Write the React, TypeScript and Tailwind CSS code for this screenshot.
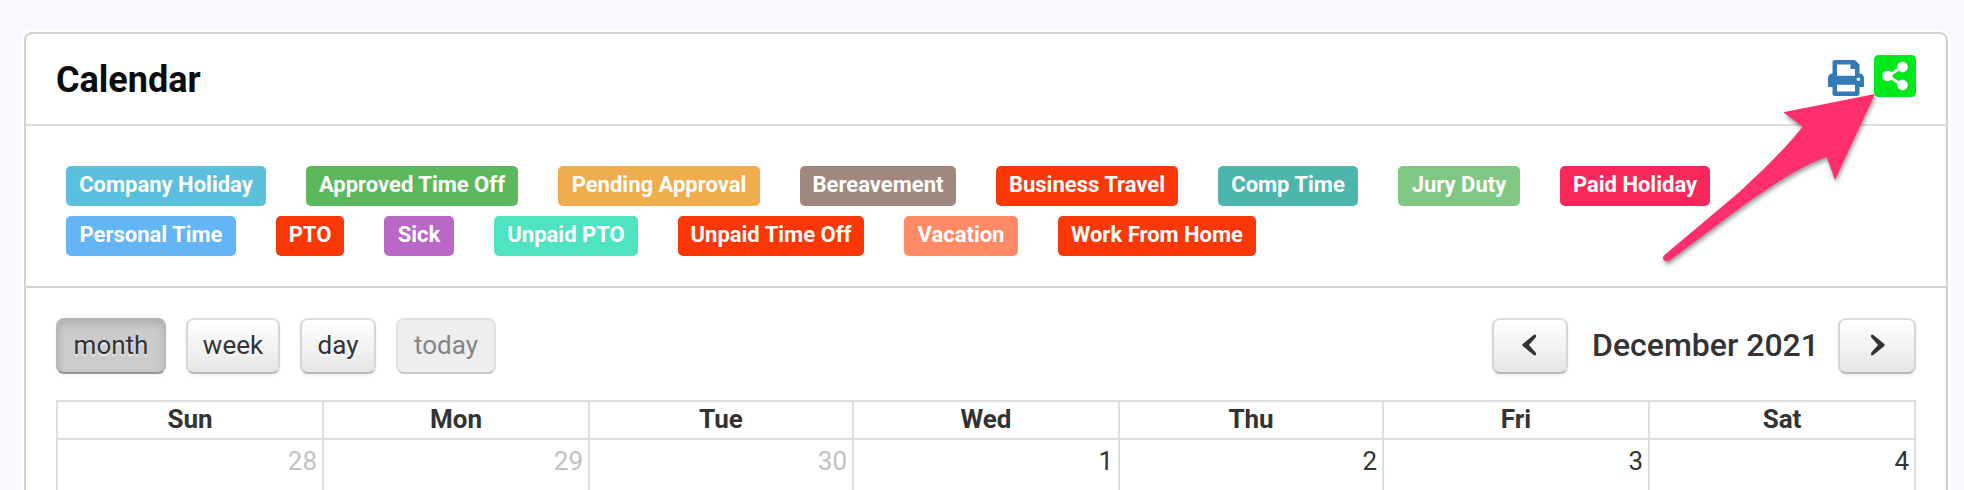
import React from "react";
import { FaPrint, FaShareAltSquare } from "react-icons/fa";

const legend = [
  [
    ["Company Holiday", "w-[200px] bg-[#5bc0de]"],
    ["Approved Time Off", "w-[212px] bg-[#5cb85c]"],
    ["Pending Approval", "w-[202px] bg-[#f0ad4e]"],
    ["Bereavement", "w-[156px] bg-[#a1887f]"],
    ["Business Travel", "w-[182px] bg-[#f93707]"],
    ["Comp Time", "w-[140px] bg-[#4db6ac]"],
    ["Jury Duty", "w-[122px] bg-[#81c784]"],
    ["Paid Holiday", "w-[150px] bg-[#f8285a]"],
  ],
  [
    ["Personal Time", "w-[170px] bg-[#64b5f6]"],
    ["PTO", "w-[68px] bg-[#f93707]"],
    ["Sick", "w-[70px] bg-[#ba68c8]"],
    ["Unpaid PTO", "w-[144px] bg-[#50e3c2]"],
    ["Unpaid Time Off", "w-[186px] bg-[#f93707]"],
    ["Vacation", "w-[114px] bg-[#ff8a65]"],
    ["Work From Home", "w-[198px] bg-[#f93707]"],
  ],
];

const days = [
  ["Sun", "28"],
  ["Mon", "29"],
  ["Tue", "30"],
  ["Wed", "1"],
  ["Thu", "2"],
  ["Fri", "3"],
  ["Sat", "4"],
];

const buttonBase =
  "flex h-14 shrink-0 items-center justify-center rounded-lg border-2 pb-0.5 text-[26px] text-[#333] [text-shadow:0_2px_2px_rgba(255,255,255,0.75)]";
const raised =
  "border-[#dedede] border-x-[#d6d6d6] border-b-[#b8b8b8] bg-linear-to-b from-white to-[#e6e6e6] shadow-[0_2px_4px_rgba(0,0,0,0.05)]";

function Chevron({ flip = false }: { flip?: boolean }) {
  return (
    <svg width="16" height="22" viewBox="0 0 16 22" fill="#333" className={flip ? "ml-0.5 -scale-x-100" : "mr-0.5"}>
      <path d="M12.6 1Q14.6 -.2 15 1.6Q15.2 2.8 14.4 3.8L8 11L14.4 18.2Q15.2 19.2 15 20.4Q14.6 22.2 12.6 21L2 12.2Q.6 11 2 9.8Z" />
    </svg>
  );
}

function Arrow() {
  return (
    <svg
      className="pointer-events-none absolute top-[80px] left-[1650px] drop-shadow-[1px_3px_2px_rgba(0,0,0,0.4)]"
      width="240"
      height="190"
      viewBox="1650 80 240 190"
      fill="#ff2f6d"
    >
      <path d="M1875 94L1783.3 112.3L1802.7 126.7C1784 150 1762 171 1740 191.5L1664.2 255.2C1661.5 258 1663.4 261.2 1667 261.2C1668.6 261.2 1669.8 260.6 1671 259.6L1742 206.5C1772 186 1798 167 1826.7 157L1835 179.7Z" />
    </svg>
  );
}

export default function App() {
  return (
    <div className="relative h-[490px] overflow-hidden bg-[#f8f9ff] pt-[30px] pr-[14px] pl-[22px] font-[Roboto,sans-serif] text-[#333]">
      <div className="h-[480px] rounded-t-[10px] bg-white px-0.5 pt-0.5">
        <main className="h-[480px] rounded-t-lg border-2 border-[#d2d2d2] bg-white">
          <header className="flex h-[92px] items-center justify-between border-b-2 border-[#ddd] px-[30px]">
            <h1 className="pt-0.5 text-[36px] font-bold text-[#0b0c0e]">Calendar</h1>
            <div className="flex items-center gap-2.5 pb-1.5">
              <FaPrint className="mt-1 size-9 text-[#337ab7]" />
              <FaShareAltSquare className="h-12 w-[42px] text-[#00e91b]" />
            </div>
          </header>

          <section className="flex h-[162px] flex-col gap-2.5 border-b-2 border-[#d2d2d2] pt-10 pl-10">
            {legend.map((row, i) => (
              <div key={i} className="flex gap-10">
                {row.map(([name, style]) => (
                  <span
                    key={name}
                    className={`${style} flex h-10 shrink-0 items-center justify-center rounded-[5px] pb-[3px] text-[22px] font-bold whitespace-nowrap text-white`}
                  >
                    {name}
                  </span>
                ))}
              </div>
            ))}
          </section>

          <section className="px-[30px] pt-[30px]">
            <div className="flex h-14 items-center justify-between">
              <div className="flex gap-5">
                <button className={`${buttonBase} w-[110px] border-[#b4b4b4] border-x-[#b8b8b8] border-b-[#969696] bg-[#ccc] shadow-[inset_0_4px_8px_rgba(0,0,0,0.15),0_2px_4px_rgba(0,0,0,0.05)]`}>
                  month
                </button>
                <button className={`${buttonBase} ${raised} w-[94px]`}>week</button>
                <button className={`${buttonBase} ${raised} w-[76px]`}>day</button>
                <button className="flex h-14 w-[100px] items-center justify-center rounded-lg border-2 border-[#e0e0e0] border-b-[#c8c8c8] bg-[#eee] pb-0.5 text-[26px] text-[#848484]">
                  today
                </button>
              </div>
              <div className="flex items-center">
                <button className={`${buttonBase} ${raised} w-[76px]`} aria-label="previous">
                  <Chevron />
                </button>
                <h2 className="w-[270px] pb-0.5 pl-[5px] text-center text-[32px] font-medium whitespace-nowrap">
                  December 2021
                </h2>
                <button className={`${buttonBase} ${raised} w-[78px]`} aria-label="next">
                  <Chevron flip />
                </button>
              </div>
            </div>

            <div className="mt-[26px] grid h-[120px] grid-cols-[268px_266px_264px_266px_264px_266px_266px] border-t-2 border-[#ddd]">
              {days.map(([day, date], i) => (
                <div key={day} className={`border-r-2 border-[#ddd] ${i === 0 ? "border-l-2" : ""}`}>
                  <div className="flex h-[38px] items-center justify-center border-b-2 border-[#ddd] pb-0.5 text-[26px] font-bold">
                    {day}
                  </div>
                  <div className={`pt-0.5 pr-[5px] text-right text-[26px] ${i < 3 ? "text-[#c2c2c2]" : "text-[#333]"}`}>
                    {date}
                  </div>
                </div>
              ))}
            </div>
          </section>
        </main>
      </div>
      <Arrow />
    </div>
  );
}
